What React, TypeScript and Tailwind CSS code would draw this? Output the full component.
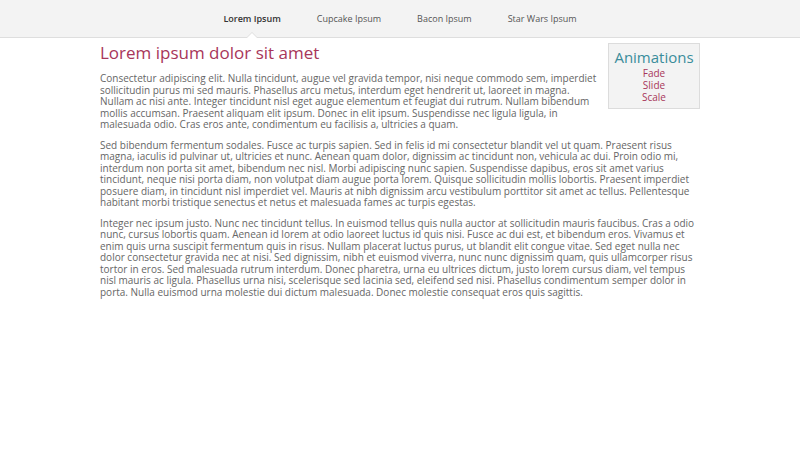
import React from 'react';

const NAV = ['Lorem Ipsum', 'Cupcake Ipsum', 'Bacon Ipsum', 'Star Wars Ipsum'];

const P1 =
  'Consectetur adipiscing elit. Nulla tincidunt, augue vel gravida tempor, nisi neque commodo sem, imperdiet sollicitudin purus mi sed mauris. Phasellus arcu metus, interdum eget hendrerit ut, laoreet in magna. Nullam ac nisi ante. Integer tincidunt nisl eget augue elementum et feugiat dui rutrum. Nullam bibendum mollis accumsan. Praesent aliquam elit ipsum. Donec in elit ipsum. Suspendisse nec ligula ligula, in malesuada odio. Cras eros ante, condimentum eu facilisis a, ultricies a quam.';

const P2 =
  'Sed bibendum fermentum sodales. Fusce ac turpis sapien. Sed in felis id mi consectetur blandit vel ut quam. Praesent risus magna, iaculis id pulvinar ut, ultricies et nunc. Aenean quam dolor, dignissim ac tincidunt non, vehicula ac dui. Proin odio mi, interdum non porta sit amet, bibendum nec nisl. Morbi adipiscing nunc sapien. Suspendisse dapibus, eros sit amet varius tincidunt, neque nisi porta diam, non volutpat diam augue porta lorem. Quisque sollicitudin mollis lobortis. Praesent imperdiet posuere diam, in tincidunt nisl imperdiet vel. Mauris at nibh dignissim arcu vestibulum porttitor sit amet ac tellus. Pellentesque habitant morbi tristique senectus et netus et malesuada fames ac turpis egestas.';

const P3 =
  'Integer nec ipsum justo. Nunc nec tincidunt tellus. In euismod tellus quis nulla auctor at sollicitudin mauris faucibus. Cras a odio nunc, cursus lobortis quam. Aenean id lorem at odio laoreet luctus id quis nisi. Fusce ac dui est, et bibendum eros. Vivamus et enim quis urna suscipit fermentum quis in risus. Nullam placerat luctus purus, ut blandit elit congue vitae. Sed eget nulla nec dolor consectetur gravida nec at nisi. Sed dignissim, nibh et euismod viverra, nunc nunc dignissim quam, quis ullamcorper risus tortor in eros. Sed malesuada rutrum interdum. Donec pharetra, urna eu ultrices dictum, justo lorem cursus diam, vel tempus nisl mauris ac ligula. Phasellus urna nisi, scelerisque sed lacinia sed, eleifend sed nisi. Phasellus condimentum semper dolor in porta. Nulla euismod urna molestie dui dictum malesuada. Donec molestie consequat eros quis sagittis.';

export default function App() {
  return (
    <div className="w-[800px] h-[450px] bg-white overflow-hidden font-['Open_Sans',sans-serif]">
      {/* Top nav */}
      <nav className="h-[38px] bg-[#f3f3f3] border-b border-[#dedede] flex justify-center">
        {NAV.map((item, i) => (
          <a
            key={item}
            className={`relative px-[18px] flex items-center text-[9px] ${
              i === 0 ? 'font-semibold text-[#333]' : 'text-[#555]'
            }`}
          >
            {item}
            {i === 0 && (
              <span className="absolute left-1/2 -translate-x-1/2 bottom-[-1px] w-0 h-0 border-x-[6px] border-x-transparent border-b-[6px] border-b-[#dedede]">
                <span className="absolute left-[-5px] top-[1px] w-0 h-0 border-x-[5px] border-x-transparent border-b-[5px] border-b-white" />
              </span>
            )}
          </a>
        ))}
      </nav>

      {/* Content */}
      <div className="w-[600px] mx-auto pt-[3px] text-[#666] text-[10px] leading-[11.5px]">
        <aside className="float-right w-[92px] ml-[11px] mt-[2px] mb-[12px] bg-[#f3f3f3] border border-[#dcdcdc] pt-[3px] pb-[5px] text-center">
          <h3 className="text-[15px] leading-[20px] text-[#3a8d9b]">Animations</h3>
          <ul className="text-[10px] leading-[12px] text-[#a8365a]">
            <li>Fade</li>
            <li>Slide</li>
            <li>Scale</li>
          </ul>
        </aside>
        <h1 className="text-[17px] leading-[24px] font-normal text-[#a8365a] mb-[8px]">
          Lorem ipsum dolor sit amet
        </h1>
        <p className="mb-[9px]">{P1}</p>
        <p className="mb-[9px]">{P2}</p>
        <p>{P3}</p>
      </div>
    </div>
  );
}
